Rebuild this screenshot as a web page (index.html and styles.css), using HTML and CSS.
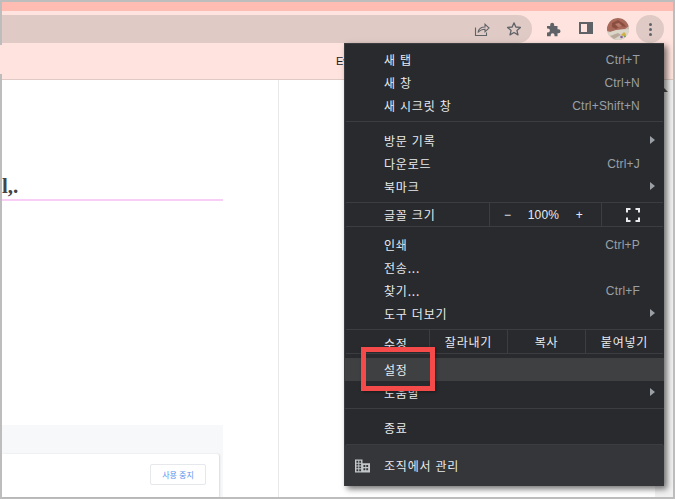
FILE: index.html
```html
<!DOCTYPE html>
<html lang="ko">
<head>
<meta charset="utf-8">
<title>Chrome 메뉴</title>
<link rel="stylesheet" href="styles.css">
</head>
<body>
<div class="frame">
  <div class="tabstrip"></div>
  <div class="toolbar">
    <div class="omnibox">
      <svg class="ico share" viewBox="0 0 16 16"><path d="M1.500 6.500v8h11v-3M4 11.500c.6-3.600 3-5.500 7-5.500V3.200L15 7l-4 3.800V8.200c-3 0-5.200 1-7 3.300z" fill="none" stroke="#5f6368" stroke-width="1.100"/></svg>
      <svg class="ico star" viewBox="0 0 16 16"><path d="M8 1.800l1.800 4.200 4.600.4-3.500 3 1.100 4.500L8 11.500l-4 2.400 1.100-4.500-3.500-3 4.600-.4z" fill="none" stroke="#5f6368" stroke-width="1.300" stroke-linejoin="round"/></svg>
    </div>
    <svg class="ico puzzle" viewBox="0 0 16 16"><path d="M1 5h3.200V3.700a2 2 0 0 1 4 0V5h3.300v3.200h1a2 2 0 0 1 0 4h-1v3H8.500v-1.100a1.900 1.900 0 0 0-3.800 0V15.200H1v-3.700h.9a2 2 0 0 0 0-4H1z" fill="#5f6368"/></svg>
    <svg class="ico panel" viewBox="0 0 14 12"><path fill-rule="evenodd" d="M0 0h14v12H0zM2 2v8h6V2z" fill="#5f6368"/></svg>
    <svg class="avatar" viewBox="0 0 22 22">
      <defs><clipPath id="round"><circle cx="11" cy="11" r="11"/></clipPath></defs>
      <g clip-path="url(#round)">
        <rect width="22" height="22" fill="#cdbcb2"/>
        <path d="M0 9C2 3 6 0 11 0c5 0 9 3 11 8l-4 3-7 1-7 2-4-1z" fill="#a9695a"/>
        <path d="M5 5l6-3 6 4 2 3-6-1-4 3-4-2z" fill="#8a4d3f"/>
        <path d="M8 6l4-1 3 3-4 1z" fill="#b87c6c"/>
        <path d="M0 15l9-3 13-1v11H0z" fill="#dcd5c9"/>
        <path d="M3 18l8-3 3 2-7 4z" fill="#b9aa9c"/>
        <path d="M14 17l3-3 2 2-1 3z" fill="#d0b040"/>
        <circle cx="14.500" cy="19" r="1.300" fill="#8a5fa0"/>
        <circle cx="18" cy="18.500" r="1" fill="#6f9a5e"/>
      </g>
    </svg>
    <div class="more"><span></span><span></span><span></span></div>
  </div>
  <div class="bookmarks"><span class="bm-text">Ev</span></div>
  <div class="content">
    <div class="left">
      <div class="heading">l,.</div>
      <div class="panel-box">
        <div class="card"><button class="stop">사용 중지</button></div>
      </div>
    </div>
    <div class="right">
      <div class="scrollbar"><i class="up"></i></div>
    </div>
  </div>
</div>
<div class="edge"></div>

<div class="menu">
  <div class="group">
    <div class="row"><span>새 탭</span><span class="key">Ctrl+T</span></div>
    <div class="row"><span>새 창</span><span class="key">Ctrl+N</span></div>
    <div class="row"><span>새 시크릿 창</span><span class="key">Ctrl+Shift+N</span></div>
  </div>
  <div class="group">
    <div class="row"><span>방문 기록</span><i class="arrow"></i></div>
    <div class="row"><span>다운로드</span><span class="key">Ctrl+J</span></div>
    <div class="row"><span>북마크</span><i class="arrow"></i></div>
  </div>
  <div class="cells zoom">
    <div class="cell label">글꼴 크기</div>
    <div class="cell zoomctl"><span>−</span><span>100%</span><span>+</span></div>
    <div class="cell full">
      <svg class="fs" viewBox="0 0 14 14"><path d="M1 4.500V1h3.500M9.500 1H13v3.500M13 9.500V13H9.500M4.500 13H1V9.500" fill="none" stroke="#e8eaed" stroke-width="2"/></svg>
    </div>
  </div>
  <div class="group tight">
    <div class="row"><span>인쇄</span><span class="key">Ctrl+P</span></div>
    <div class="row"><span>전송...</span></div>
    <div class="row"><span>찾기...</span><span class="key">Ctrl+F</span></div>
    <div class="row"><span>도구 더보기</span><i class="arrow"></i></div>
  </div>
  <div class="cells edit">
    <div class="cell label edit-label">수정</div>
    <div class="cell act">잘라내기</div>
    <div class="cell act">복사</div>
    <div class="cell act">붙여넣기</div>
  </div>
  <div class="group after-edit">
    <div class="row hover"><span>설정</span></div>
    <div class="row"><span>도움말</span><i class="arrow"></i></div>
  </div>
  <div class="group quit">
    <div class="row"><span>종료</span></div>
  </div>
  <div class="org">
    <svg class="bld" viewBox="0 0 16 14"><path fill-rule="evenodd" d="M0 0h8v4h8v10H0zM1.500 1.500v2h2v-2zm3 0v2h2v-2zm-3 3v2h2v-2zm3 0v2h2v-2zm-3 3v2h2v-2zm3 0v2h2v-2zm-3 3v2h2v-2zm3 0v2h2v-2zM9 6v2h2V6zm3 0v2h2V6zM9 9.500v2h2v-2zm3 0v2h2v-2z" fill="#c4c7c9"/></svg>
    <span>조직에서 관리</span>
  </div>
</div>
<div class="callout"></div>
</body>
</html>
```
FILE: styles.css
```css
* { box-sizing: border-box; }
html, body { margin: 0; padding: 0; height: 499px; overflow: hidden; background: #fff; }
body { font-family: "Noto Sans CJK KR", "Noto Sans", sans-serif; position: relative; }

.frame {
  height: 499px;
  border: 2px solid #bdbdbd;
  display: flex;
  flex-direction: column;
  background: #fff;
}
.tabstrip { height: 9px; background: #ffbcb2; flex: none; }
.toolbar {
  height: 33px;
  flex: none;
  background: #ffe3de;
  padding-top: 4px;
  display: flex;
  align-items: flex-start;
}
.omnibox {
  width: 530px;
  height: 28px;
  background: #e0cac5;
  border-radius: 0 14px 14px 0;
  display: flex;
  align-items: center;
  justify-content: flex-end;
  gap: 16px;
  padding-right: 10px;
  flex: none;
}
.ico { display: block; flex: none; }
.share { width: 16px; height: 16px; }
.star { width: 16px; height: 16px; }
.puzzle { width: 16px; height: 16px; margin: 6px 0 0 14px; }
.panel { width: 14px; height: 12px; margin: 7px 0 0 17px; }
.avatar { width: 22px; height: 22px; margin: 3px 0 0 14px; flex: none; }
.more {
  width: 28px; height: 28px; margin-left: 7px; border-radius: 50%;
  background: #e0cac5; flex: none;
  display: flex; flex-direction: column; align-items: center; justify-content: center; gap: 2px;
}
.more span { width: 3px; height: 3px; border-radius: 50%; background: #5f6368; }
.bookmarks {
  height: 36px;
  flex: none;
  background: #ffe3de;
  border-bottom: 1px solid #dfcac5;
  position: relative;
  overflow: hidden;
  padding-left: 334px;
  font-size: 11px;
  line-height: 33px;
  color: #222;
}
.bm-text { font-family: "Liberation Sans", sans-serif; }
.content { flex: 1; display: flex; min-height: 0; }
.left {
  width: 277px;
  border-right: 1px solid #e8e8e8;
  display: flex;
  flex-direction: column;
  flex: none;
}
.heading {
  width: 221px;
  height: 121px;
  border-bottom: 2px solid #f8cdf6;
  font: 700 21px/1 "Liberation Serif", serif;
  color: #444;
  padding-top: 96px;
}
.panel-box {
  margin-top: auto;
  width: 221px;
  height: 72px;
  background: #f7f8fa;
  padding-top: 29px;
}
.card {
  width: 217px;
  height: 43px;
  background: #fff;
  box-shadow: 1px 0 2px rgba(0,0,0,.12);
  border-radius: 0 2px 0 0;
  padding: 10px 13px 0 0;
  display: flex;
  justify-content: flex-end;
  align-items: flex-start;
}
.stop {
  width: 56px;
  height: 21px;
  padding: 0;
  background: #fff;
  border: 1px solid #e6e8eb;
  border-radius: 2px;
  color: #5a96ee;
  font: 8px/1 "Noto Sans CJK KR", sans-serif;
}
.right { flex: 1; display: flex; justify-content: flex-end; }
.scrollbar {
  width: 18px;
  background: #f1f1f1;
  display: flex;
  justify-content: center;
  align-items: flex-start;
  padding-top: 8px;
}
.up {
  border-bottom: 4px solid #505050;
  border-left: 4px solid transparent;
  border-right: 4px solid transparent;
}
.edge {
  position: absolute; left: 0; top: 45px; width: 2px; height: 29px; background: #ffe3de;
}

.menu {
  position: absolute;
  left: 344px; top: 43px;
  width: 320px; height: 443px;
  background: #292a2d;
  border: 1px solid #3c3d40;
  border-width: 1px 0 0 1px;
  box-shadow: 3px 3px 6px rgba(0,0,0,.55);
  color: #e8eaed;
  font-size: 12px;
  letter-spacing: .8px;
  padding-top: 4px;
  display: flex;
  flex-direction: column;
}
.group { padding-bottom: 4px; border-bottom: 1px solid #3c3d40; margin: 0 1px 7px 1px; }
.row {
  height: 23px;
  display: flex;
  align-items: center;
  justify-content: space-between;
  padding: 0 23px 0 38px;
  position: relative;
}
.key { color: #9aa0a6; font-family: "Liberation Sans", sans-serif; letter-spacing: .2px; }
.arrow {
  position: absolute; right: 8px; top: 7px;
  border-left: 5px solid #9aa0a6;
  border-top: 4px solid transparent;
  border-bottom: 4px solid transparent;
}
.cells {
  display: flex;
  margin: 0 1px;
  border-bottom: 1px solid #3c3d40;
}
.cell { display: flex; align-items: center; justify-content: center; border-left: 1px solid #3c3d40; }
.cell.label { justify-content: flex-start; padding-left: 38px; border-left: 0; }
.zoom { height: 24px; margin-top: -7px; margin-bottom: 6px; }
.zoom .label { width: 143px; }
.zoomctl { width: 112px; justify-content: space-between; padding: 0 18px 0 14px; font-family: "Liberation Sans", sans-serif; letter-spacing: .2px; }
.full { flex: 1; }
.fs { width: 14px; height: 14px; }
.tight { margin-bottom: 0; padding-bottom: 4px; }
.edit { height: 24px; margin-bottom: 4px; }
.edit .label { width: 83px; padding-top: 3px; }
.act { width: 78px; }
.act:last-child { flex: 1; }
.after-edit { margin: 0 0 7px 0; padding-bottom: 4px; }
.after-edit .row { padding-left: 39px; }
.after-edit .row .arrow { right: 9px; }
.hover { background: #3f4042; }
.quit { margin-bottom: 0; padding-bottom: 5px; }
.org {
  flex: 1;
  background: #35363a;
  display: flex;
  align-items: center;
  padding-left: 10px;
  gap: 14px;
}
.bld { width: 15px; height: 14px; flex: none; }
.callout {
  position: absolute;
  left: 361px; top: 347px;
  width: 74px; height: 44px;
  border: 5px solid #f44a4a;
  box-shadow: 1px 1px 3px rgba(0,0,0,.4);
}
```
